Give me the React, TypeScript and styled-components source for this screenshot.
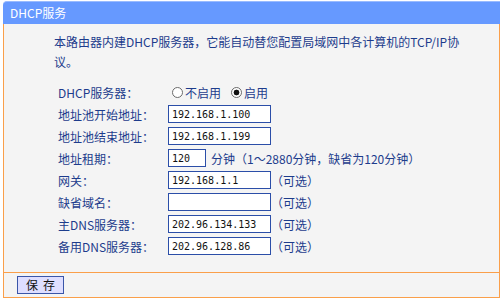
import React, { useState } from 'react';
import styled, { createGlobalStyle } from 'styled-components';

const GlobalStyle = createGlobalStyle`
  html, body {
    margin: 0;
    padding: 0;
    background: #ffffff;
  }

  body {
    font-family: "Noto Sans CJK SC", "Liberation Sans", sans-serif;
    font-size: 12px;
  }
`;

interface Field {
  label: string;
  value: string;
  narrow?: boolean;
  note?: string;
}

const fields: Field[] = [
  { label: '地址池开始地址：', value: '192.168.1.100' },
  { label: '地址池结束地址：', value: '192.168.1.199' },
  { label: '地址租期：', value: '120', narrow: true, note: '分钟（1～2880分钟，缺省为120分钟）' },
  { label: '网关：', value: '192.168.1.1', note: '（可选）' },
  { label: '缺省域名：', value: '', note: '（可选）' },
  { label: '主DNS服务器：', value: '202.96.134.133', note: '（可选）' },
  { label: '备用DNS服务器：', value: '202.96.128.86', note: '（可选）' },
];

function App() {
  const [enabled, setEnabled] = useState(true);

  return (
    <>
      <GlobalStyle />
      <Panel>
        <Header>DHCP服务</Header>
        <Body>
          <Content>
            <Intro>
              本路由器内建DHCP服务器，它能自动替您配置局域网中各计算机的TCP/IP协议。
            </Intro>
            <Form>
              <Row>
                <Label>DHCP服务器：</Label>
                <Choices>
                  <Choice>
                    <Radio type="radio" name="dhcp" checked={!enabled} onChange={() => setEnabled(false)} />
                    不启用
                  </Choice>
                  <Choice>
                    <Radio type="radio" name="dhcp" checked={enabled} onChange={() => setEnabled(true)} />
                    启用
                  </Choice>
                </Choices>
              </Row>
              {fields.map((f) => (
                <Row key={f.label}>
                  <Label>{f.label}</Label>
                  <Cell>
                    <TextBox defaultValue={f.value} narrow={f.narrow} />
                    {f.note && <Note tight={!f.narrow}>{f.note}</Note>}
                  </Cell>
                </Row>
              ))}
            </Form>
          </Content>
          <Footer>
            <SaveButton>保存</SaveButton>
          </Footer>
        </Body>
      </Panel>
    </>
  );
}

export default App;

const Panel = styled.div`
  width: 497px;
  margin: 1px 0 0 3px;
`;

const Header = styled.div`
  height: 22px;
  line-height: 22px;
  padding-left: 7px;
  background: #6699ff;
  border-top: 1px solid #99bbff;
  border-radius: 4px 0 0 0;
  color: #ffffff;
  font-size: 12px;
`;

const Body = styled.div`
  background: #f4f4f4;
  border: 1px solid #fa9f4a;
  border-top: none;
`;

const Content = styled.div`
  padding: 8px 0 15px 50px;
`;

const Intro = styled.p`
  width: 416px;
  margin: 0;
  line-height: 20px;
  color: #1d3c8c;
`;

const Form = styled.div`
  margin: 9px 0 0 4px;
`;

const Row = styled.div`
  display: grid;
  grid-template-columns: 110px 1fr;
  align-items: center;
  height: 22px;
`;

const Label = styled.span`
  color: #1d3c8c;
  white-space: nowrap;
`;

const Choices = styled.div`
  display: flex;
  align-items: center;
  gap: 10px;
  padding-left: 4px;
`;

const Choice = styled.label`
  display: flex;
  align-items: center;
  gap: 2px;
  color: #1d3c8c;
`;

const Radio = styled.input`
  appearance: none;
  width: 11px;
  height: 11px;
  margin: 0;
  border: 1px solid #6b6b6b;
  border-radius: 50%;
  background: #ffffff;

  &:checked {
    background: radial-gradient(circle, #111111 0 2.6px, #ffffff 3.2px);
  }
`;

const Cell = styled.div`
  display: flex;
  align-items: center;
`;

const TextBox = styled.input<{ narrow?: boolean }>`
  box-sizing: border-box;
  width: ${(p) => (p.narrow ? '38px' : '103px')};
  height: 18px;
  padding: 0 3px;
  border: 1px solid #2b4ea8;
  background: #ffffff;
  color: #111111;
  font-family: "DejaVu Sans Mono", monospace;
  font-size: 10px;
  outline: none;
`;

const Note = styled.span<{ tight?: boolean }>`
  margin-left: ${(p) => (p.tight ? '0' : '5px')};
  color: #1d3c8c;
  white-space: nowrap;
`;

const Footer = styled.div`
  display: flex;
  align-items: center;
  height: 24px;
  padding-left: 13px;
  border-top: 1px solid #fa9f4a;
`;

const SaveButton = styled.button`
  width: 47px;
  height: 18px;
  padding: 0 0 0 5px;
  border: 1px solid #3a55a8;
  background: #dedeff;
  color: #111111;
  font-family: "Noto Sans CJK SC", sans-serif;
  font-size: 12px;
  line-height: 16px;
  letter-spacing: 5px;
`;
